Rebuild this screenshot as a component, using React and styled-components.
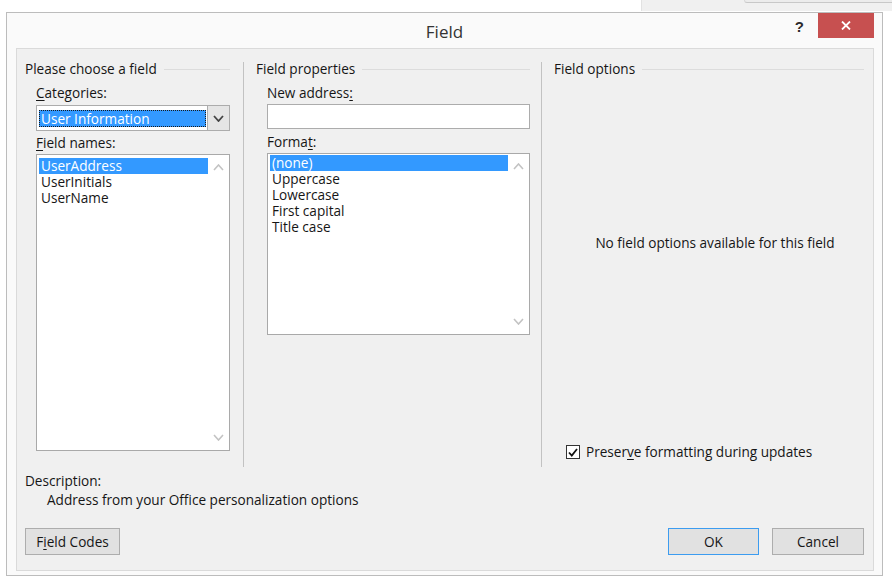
import React from "react";
import styled, { createGlobalStyle } from "styled-components";

const Global = createGlobalStyle`
  html, body { margin: 0; padding: 0; background: #ffffff; }
  body { font-family: "Open Sans", "Noto Sans", sans-serif; font-size: 13.6px; color: #161616; }
  * { box-sizing: border-box; }
`;

const Page = styled.div`
  width: 892px;
  height: 586px;
  display: flex;
  flex-direction: column;
`;

const TopStrip = styled.div`
  height: 12px;
  display: flex;
  justify-content: flex-end;
`;

const OtherWindow = styled.div`
  width: 251px;
  height: 11px;
  background: #f0f0f0;
  border-left: 1px solid #e2e2e2;
  display: flex;
  justify-content: flex-end;
`;

const OtherWindowEdge = styled.div`
  width: 148px;
  height: 3px;
  border-bottom: 1px solid #c8c8c8;
  border-left: 1px solid #d8d8d8;
  border-bottom-left-radius: 3px;
  background: #ececec;
`;

const Window = styled.div`
  margin-left: 6px;
  width: 877px;
  height: 564px;
  border: 1px solid #bcbcbc;
  background: #fafafa;
  display: flex;
  flex-direction: column;
`;

const TitleBar = styled.div`
  height: 35px;
  display: grid;
  grid-template-columns: 1fr auto 1fr;
  align-items: start;
`;

const Title = styled.div`
  grid-column: 2;
  font-size: 17px;
  line-height: 20px;
  margin-top: 9px;
  color: #333333;
`;

const Controls = styled.div`
  grid-column: 3;
  justify-self: end;
  display: flex;
  align-items: flex-start;
  margin-right: 8px;
`;

const HelpButton = styled.div`
  font-family: "Liberation Sans", Arial, sans-serif;
  font-weight: bold;
  font-size: 15px;
  line-height: 16px;
  color: #2b2b2b;
  margin-top: 6px;
  margin-right: 14px;
`;

const CloseButton = styled.div`
  width: 56px;
  height: 25px;
  background: #c75050;
  display: flex;
  align-items: center;
  justify-content: center;
`;

const Panel = styled.div`
  margin: 0 8px 4px 9px;
  flex: 1;
  border: 1px solid #dadada;
  background: #f0f0f0;
  display: flex;
  flex-direction: column;
`;

const TopRow = styled.div`
  display: flex;
  padding: 12px 9px 0 8px;
  height: 418px;
`;

const Group = styled.div`
  display: flex;
  flex-direction: column;
  width: ${(p) => (p.$w ? `${p.$w}px` : "auto")};
  flex: ${(p) => (p.$w ? "none" : "1")};
`;

const GroupHeader = styled.div`
  display: flex;
  align-items: center;
  height: 16px;
  line-height: 16px;
  white-space: nowrap;
  &::after {
    content: "";
    flex: 1;
    height: 1px;
    background: #dcdcdc;
    margin-left: 7px;
  }
`;

const Separator = styled.div`
  width: 1px;
  background: #c2c2c2;
  margin: 1px ${(p) => p.$r}px 0 ${(p) => p.$l}px;
`;

const FieldLabel = styled.div`
  margin: ${(p) => p.$mt}px 0 0 11px;
  height: 16px;
  line-height: 16px;
  white-space: nowrap;
`;

const Key = styled.span`
  text-decoration: underline;
  text-underline-offset: 2px;
`;

const Combo = styled.div`
  margin: 4px 0 0 11px;
  width: 194px;
  height: 26px;
  border: 1px solid #acacac;
  background: #ffffff;
  display: flex;
  align-items: center;
  padding-left: 2px;
`;

const ComboValue = styled.div`
  flex: 1;
  height: 17px;
  line-height: 17px;
  background: #3399ff;
  color: #ffffff;
  padding-left: 2px;
  outline: 1px dotted #1a1a1a;
  outline-offset: -1px;
  margin-right: 1px;
`;

const ComboButton = styled.div`
  width: 22px;
  height: 24px;
  border-left: 1px solid #acacac;
  background: #e5e5e5;
  display: flex;
  align-items: center;
  justify-content: center;
`;

const ListBox = styled.div`
  margin: 3px 0 0 11px;
  width: ${(p) => p.$w}px;
  height: ${(p) => p.$h}px;
  border: 1px solid #a9a9a9;
  background: #ffffff;
  display: flex;
`;

const ListItems = styled.div`
  flex: 1;
  padding: ${(p) => p.$pt}px 0 0 2px;
`;

const ListItem = styled.div`
  height: 16px;
  line-height: 16px;
  padding-left: 2px;
  white-space: nowrap;
  background: ${(p) => (p.$selected ? "#3399ff" : "transparent")};
  color: ${(p) => (p.$selected ? "#ffffff" : "#161616")};
`;

const ScrollTrack = styled.div`
  width: 21px;
  display: flex;
  flex-direction: column;
  justify-content: space-between;
  align-items: center;
  padding: 9px 0 9px;
`;

const TextInput = styled.div`
  margin: 3px 0 0 11px;
  width: 263px;
  height: 25px;
  border: 1px solid #acacac;
  background: #ffffff;
`;

const Message = styled.div`
  margin-top: 158px;
  padding-left: 12px;
  text-align: center;
  height: 16px;
  line-height: 16px;
  white-space: nowrap;
`;

const CheckRow = styled.div`
  margin: auto 0 7px 12px;
  display: flex;
  align-items: center;
  height: 16px;
  line-height: 16px;
  gap: 6px;
  white-space: nowrap;
`;

const CheckBox = styled.div`
  width: 14px;
  height: 14px;
  border: 1px solid #333333;
  background: #ffffff;
  display: flex;
  align-items: center;
  justify-content: center;
`;

const Description = styled.div`
  padding-left: 8px;
  margin-top: 6px;
  height: 16px;
  line-height: 16px;
`;

const DescriptionText = styled.div`
  padding-left: 30px;
  margin-top: 3px;
  height: 16px;
  line-height: 16px;
`;

const ButtonRow = styled.div`
  margin-top: 20px;
  padding: 0 9px 0 8px;
  display: flex;
  gap: 13px;
`;

const Spacer = styled.div`
  flex: 1;
`;

const Button = styled.div`
  width: ${(p) => p.$w}px;
  height: 27px;
  border: 1px solid ${(p) => (p.$default ? "#3c9cf0" : "#adadad")};
  background: #e1e1e1;
  display: flex;
  align-items: center;
  justify-content: center;
  line-height: 16px;
`;

const Chevron = ({ up, color = "#c3c3c3", w = 9, h = 5, sw = 1.6 }) => (
  <svg width={w + 2} height={h + 2} viewBox={`-1 -1 ${w + 2} ${h + 2}`}>
    <polyline
      points={up ? `0,${h} ${w / 2},0 ${w},${h}` : `0,0 ${w / 2},${h} ${w},0`}
      fill="none"
      stroke={color}
      strokeWidth={sw}
    />
  </svg>
);

export default function App() {
  return (
    <Page>
      <Global />
      <TopStrip>
        <OtherWindow>
          <OtherWindowEdge />
        </OtherWindow>
      </TopStrip>
      <Window>
        <TitleBar>
          <Title>Field</Title>
          <Controls>
            <HelpButton>?</HelpButton>
            <CloseButton>
              <svg width="10" height="9" viewBox="0 0 10 9">
                <path d="M1 0.5 L9 8.5 M9 0.5 L1 8.5" stroke="#ffffff" strokeWidth="1.8" />
              </svg>
            </CloseButton>
          </Controls>
        </TitleBar>
        <Panel>
          <TopRow>
            <Group $w={205}>
              <GroupHeader>Please choose a field</GroupHeader>
              <FieldLabel $mt={8}>
                <Key>C</Key>ategories:
              </FieldLabel>
              <Combo>
                <ComboValue>User Information</ComboValue>
                <ComboButton>
                  <Chevron color="#444444" w={9} h={5} sw={1.8} />
                </ComboButton>
              </Combo>
              <FieldLabel $mt={4}>
                <Key>F</Key>ield names:
              </FieldLabel>
              <ListBox $w={194} $h={297}>
                <ListItems $pt={3}>
                  <ListItem $selected>UserAddress</ListItem>
                  <ListItem>UserInitials</ListItem>
                  <ListItem>UserName</ListItem>
                </ListItems>
                <ScrollTrack>
                  <Chevron up />
                  <Chevron />
                </ScrollTrack>
              </ListBox>
            </Group>
            <Separator $l={13} $r={12} />
            <Group $w={274}>
              <GroupHeader>Field properties</GroupHeader>
              <FieldLabel $mt={8}>
                New address<Key>:</Key>
              </FieldLabel>
              <TextInput />
              <FieldLabel $mt={5}>
                Forma<Key>t</Key>:
              </FieldLabel>
              <ListBox $w={263} $h={182}>
                <ListItems $pt={1}>
                  <ListItem $selected>(none)</ListItem>
                  <ListItem>Uppercase</ListItem>
                  <ListItem>Lowercase</ListItem>
                  <ListItem>First capital</ListItem>
                  <ListItem>Title case</ListItem>
                </ListItems>
                <ScrollTrack>
                  <Chevron up />
                  <Chevron />
                </ScrollTrack>
              </ListBox>
            </Group>
            <Separator $l={11} $r={12} />
            <Group>
              <GroupHeader>Field options</GroupHeader>
              <Message>No field options available for this field</Message>
              <CheckRow>
                <CheckBox>
                  <svg width="10" height="9" viewBox="0 0 10 9">
                    <path d="M1 4.5 L3.8 7.5 L9 1" fill="none" stroke="#111111" strokeWidth="1.8" />
                  </svg>
                </CheckBox>
                <span>
                  Preser<Key>v</Key>e formatting during updates
                </span>
              </CheckRow>
            </Group>
          </TopRow>
          <Description>Description:</Description>
          <DescriptionText>Address from your Office personalization options</DescriptionText>
          <ButtonRow>
            <Button $w={95}>
              <span>
                F<Key>i</Key>eld Codes
              </span>
            </Button>
            <Spacer />
            <Button $w={91} $default>
              OK
            </Button>
            <Button $w={92}>Cancel</Button>
          </ButtonRow>
        </Panel>
      </Window>
    </Page>
  );
}
